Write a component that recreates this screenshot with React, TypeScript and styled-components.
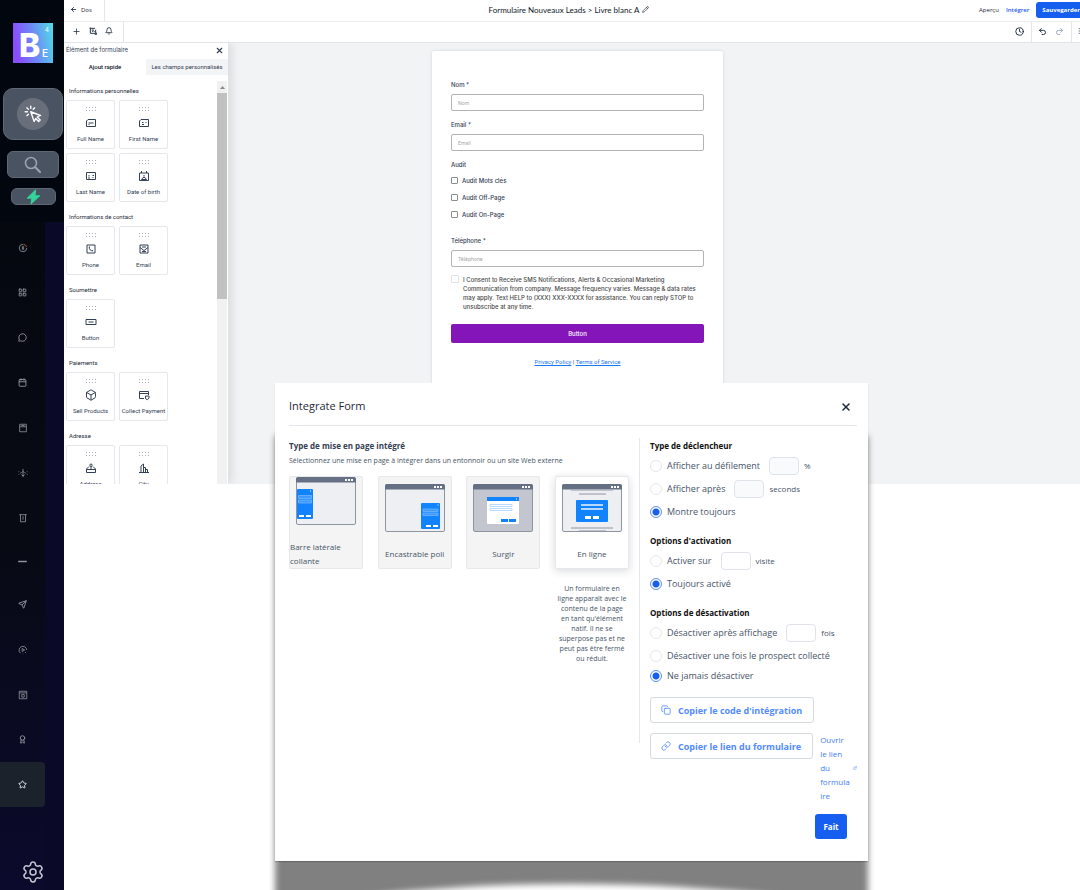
import React from 'react';
import styled, { createGlobalStyle, css } from 'styled-components';
import {
  ArrowLeft, Award, Bell, Box, Calendar, Clock, Copy, ExternalLink, LayoutGrid,
  Link as LinkIcon, MessageCircle, Minus, Pencil, Plus, Redo2, Send, Settings,
  SlidersHorizontal, Star, Undo2, X,
} from 'lucide-react';

const Global = createGlobalStyle`
  * { box-sizing: border-box; }
  body { margin: 0; background: #fff; }
  button, input { font: inherit; margin: 0; }
  button { cursor: pointer; }
  p, h1, h2, h3, ul, fieldset, legend { margin: 0; padding: 0; border: 0; }
  ul { list-style: none; }
  svg { display: block; flex: none; }
`;

const ui = '"Open Sans", "Noto Sans", sans-serif';

/* ---------- Page frame ---------- */

const Page = styled.div`
  display: flex;
  min-height: 100vh;
  font-family: ${ui};
  color: #344054;
`;

const Main = styled.main`
  flex: 1;
  min-width: 0;
  overflow: hidden;
`;

/* ---------- Sidebar ---------- */

const Sidebar = styled.aside`
  flex: none;
  width: 64px;
  display: flex;
  flex-direction: column;
  background: #02060f;
`;

const Shortcuts = styled.div`
  display: flex;
  flex-direction: column;
  align-items: center;
  height: 222px;
  padding: 23px 0 0 2px;
`;

const Shortcut = styled.button<{ $w: number; $h: number; $gap: number }>`
  display: flex;
  align-items: center;
  justify-content: center;
  width: ${(p) => p.$w}px;
  height: ${(p) => p.$h}px;
  margin-top: ${(p) => p.$gap}px;
  padding: 0;
  border: 1px solid #5f6875;
  border-radius: ${(p) => (p.$h > 40 ? 10 : 6)}px;
  background: #4a5361;
  color: #9aa1ad;
`;

const Halo = styled.span`
  display: flex;
  align-items: center;
  justify-content: center;
  width: 32px;
  height: 32px;
  border-radius: 50%;
  background: #686f7b;
  color: #fff;
`;

const NavArea = styled.div`
  flex: 1;
  display: flex;
  flex-direction: column;
  justify-content: space-between;
  padding: 3px 0 6px;
  background:
    linear-gradient(#0a0928, #0a0928) 45px 0 / 19px 100% no-repeat,
    linear-gradient(#05080f, #070a12 45%, #0a0a22 75%, #0b0a2c);
`;

const NavItem = styled.a<{ $short?: boolean; $active?: boolean }>`
  display: flex;
  align-items: center;
  justify-content: center;
  width: 45px;
  height: ${(p) => (p.$short ? 42 : 45)}px;
  color: ${(p) => (p.$active ? '#e3e6ea' : '#8d919a')};
  ${(p) => p.$active && css`
    background: #1b222c;
    border-radius: 0 4px 4px 0;
  `}
`;

const GearButton = styled.button`
  align-self: center;
  padding: 0;
  margin-left: 2px;
  border: 0;
  background: none;
  color: #c4c6d0;
`;

/* ---------- Builder ---------- */

const Builder = styled.section`
  display: flex;
  flex-direction: column;
  height: 484px;
  background: #f2f3f5;
`;

const TitleBar = styled.header`
  display: grid;
  grid-template-columns: 1fr auto 1fr;
  height: 22px;
  background: #fff;
  border-bottom: 1px solid #eaecee;
`;

const BackButton = styled.button`
  display: flex;
  align-items: center;
  gap: 4px;
  width: 41px;
  padding: 0 0 2px 6px;
  border: 0;
  border-right: 1px solid #e4e6ea;
  background: none;
  font-size: 6px;
  color: #1d2939;
`;

const FormTitle = styled.h1`
  display: flex;
  align-items: center;
  gap: 3px;
  margin-right: 6px;
  padding-bottom: 2px;
  font: 400 8px/12px Lato, sans-serif;
  color: #101828;
`;

const TitleActions = styled.div`
  display: flex;
  align-items: center;
  justify-content: flex-end;
  gap: 7px;
  padding-bottom: 2px;
  font-size: 6px;
`;

const TextButton = styled.button<{ $accent?: boolean }>`
  padding: 0;
  border: 0;
  background: none;
  font-weight: ${(p) => (p.$accent ? 600 : 400)};
  color: ${(p) => (p.$accent ? '#155eef' : '#1d2939')};
`;

const SaveButton = styled.button`
  height: 16px;
  padding: 0 0 0 6px;
  border: 0;
  border-radius: 3px 0 0 3px;
  background: #155eef;
  color: #fff;
  font-weight: 700;
`;

const ToolBar = styled.div`
  display: flex;
  justify-content: space-between;
  height: 21px;
  background: #fff;
  border-bottom: 1px solid #e1e4e8;
`;

const Tools = styled.div<{ $side?: 'left' | 'right' }>`
  display: flex;
  align-items: center;
  gap: 8px;
  padding: 0 7px 2px;
  color: #1d2939;
  ${(p) => p.$side === 'left' && css`
    padding: 0 10px 2px 8px;
    border-right: 1px solid #e4e6ea;
  `}
  ${(p) => p.$side === 'right' && css`
    padding: 0 7px 2px 6px;
    border: solid #e4e6ea;
    border-width: 0 1px;
  `}
`;

const EdgeTool = styled.div`
  display: flex;
  align-items: center;
  width: 8px;
  padding: 0 0 2px 6px;
  overflow: hidden;
`;

const ToolGroup = styled.div`
  display: flex;
`;

const IconButton = styled.button<{ $dim?: boolean }>`
  display: flex;
  padding: 0;
  border: 0;
  background: none;
  color: ${(p) => (p.$dim ? '#98a2b3' : 'inherit')};
`;

const Workspace = styled.div`
  position: relative;
  flex: 1;
  min-height: 0;
  overflow: hidden;
`;

/* ---------- Element panel, floating over the canvas ---------- */

const Panel = styled.section`
  position: absolute;
  inset: 0 auto 0 0;
  width: 164px;
  display: flex;
  flex-direction: column;
  background: #fff;
  box-shadow: 3px 0 9px rgba(16, 24, 40, 0.12);
  font-family: Roboto, sans-serif;
`;

const PanelHead = styled.div`
  display: flex;
  align-items: center;
  justify-content: space-between;
  height: 16px;
  padding: 0 4px 2px 2px;
  font: 400 6px/10px Inter, sans-serif;
  color: #344054;
`;

const Tabs = styled.div`
  display: grid;
  grid-template-columns: 1fr 1fr;
  height: 16px;
  background: #f3f4f6;
`;

const Tab = styled.button<{ $active?: boolean }>`
  padding: 0 0 2px;
  border: 0;
  background: ${(p) => (p.$active ? '#fff' : 'none')};
  font-size: 6px;
  font-weight: ${(p) => (p.$active ? 500 : 400)};
  color: ${(p) => (p.$active ? '#101828' : '#344054')};
  white-space: nowrap;
`;

const PanelBody = styled.div`
  flex: 1;
  min-height: 0;
  display: flex;
  justify-content: space-between;
  overflow: hidden;
  padding-right: 1px;
`;

const ElementList = styled.div`
  padding: 1px 0 0 2px;
`;

const GroupTitle = styled.h3`
  margin: 10px 0 4px 3px;
  font-size: 6px;
  line-height: 10px;
  font-weight: 400;
  color: #1d2939;
`;

const Tiles = styled.div`
  display: grid;
  grid-template-columns: 49px 49px;
  gap: 4px;
`;

const Tile = styled.button`
  display: flex;
  flex-direction: column;
  align-items: center;
  height: 49px;
  padding: 6px 0 0;
  border: 1px solid #e4e7ec;
  border-radius: 2px;
  background: #fff;
  font-size: 6px;
  line-height: 10px;
  color: #344054;
  white-space: nowrap;

  svg:nth-child(2) {
    margin: 5px 0;
  }
`;

const ScrollTrack = styled.div`
  width: 10px;
  margin-top: 6px;
  background: #f1f1f1;
`;

const ScrollArrow = styled.div`
  display: flex;
  align-items: center;
  justify-content: center;
  height: 12px;
  color: #8b8b8b;
`;

const ScrollThumb = styled.div`
  height: 206px;
  background: #c1c1c1;
`;

/* ---------- Form canvas ---------- */

const Canvas = styled.div`
  display: flex;
  justify-content: center;
  height: 100%;
  padding: 8px 0 0 11px;
`;

const FormCard = styled.form`
  width: 291px;
  padding: 29px 19px;
  background: #fff;
  border-radius: 2px 2px 0 0;
  box-shadow: 0 0 3px rgba(16, 24, 40, 0.15);
  font: 500 6px/10px Inter, sans-serif;
  color: #344054;
`;

const Field = styled.label`
  display: flex;
  flex-direction: column;
  gap: 4px;
  margin-bottom: 9px;
`;

const TextInput = styled.input`
  height: 17px;
  padding: 0 6px;
  border: 1px solid #b3b3b3;
  border-radius: 2px;
  background: #fff;
  font-size: 5px;
  font-weight: 400;
  outline: 0;
  &::placeholder { color: #a3a3a3; opacity: 1; }
`;

const Choices = styled.fieldset`
  margin-bottom: 13px;
`;

const ChoiceLegend = styled.legend`
  display: block;
  margin-bottom: 2px;
`;

const Choice = styled.label`
  display: flex;
  align-items: center;
  gap: 4px;
  height: 17px;
`;

const Tick = styled.input<{ $soft?: boolean }>`
  appearance: none;
  flex: none;
  width: ${(p) => (p.$soft ? 8 : 7)}px;
  height: ${(p) => (p.$soft ? 8 : 7)}px;
  border: 1px solid ${(p) => (p.$soft ? '#dfe2e7' : '#8c8c8c')};
  border-radius: 1px;
  background: #fff;
`;

const Consent = styled.label`
  display: flex;
  gap: 4px;
  margin: -1px 0 13px;
  line-height: 9px;
  color: #4a4a4a;
`;

const SubmitButton = styled.button`
  width: 100%;
  height: 19px;
  border: 0;
  border-radius: 2px;
  background: #8415b9;
  color: #fff;
`;

const Legal = styled.p`
  margin-top: 14px;
  text-align: center;
  font: 400 6px/10px Roboto, sans-serif;
  a { color: #1877f2; }
`;

/* ---------- Modal ---------- */

const Overlay = styled.div`
  position: relative;
  display: flex;
  justify-content: center;
  margin-top: -101px;
  padding-right: 1px;
`;

const Stage = styled.div`
  position: relative;
  width: 100%;
  max-width: 593px;
  padding-bottom: 29px;

  &::before {
    content: '';
    position: absolute;
    inset: 53px 0 -20px;
    background: #808080;
    filter: blur(3px);
  }

  &::after {
    content: '';
    position: absolute;
    left: 0;
    right: 0;
    bottom: -84px;
    height: 90px;
    border-radius: 50%;
    background: #fff;
    filter: blur(3px);
  }
`;

const Dialog = styled.section`
  position: relative;
  z-index: 1;
  background: #fff;
  padding-bottom: 22px;
  box-shadow: 0 1px 1px rgba(0, 0, 0, 0.2);
`;

const DialogHead = styled.header`
  display: flex;
  align-items: center;
  justify-content: space-between;
  height: 43px;
  margin: 0 11px 0 14px;
  padding: 6px 5px 0 0;
  border-bottom: 1px solid #e4e7ec;
  color: #1d2939;
`;

const DialogTitle = styled.h2`
  padding-bottom: 2px;
  font-size: 11px;
  line-height: 16px;
  font-weight: 500;
`;

const DialogBody = styled.div`
  display: flex;
  padding: 12px 11px 0 14px;
`;

const LayoutColumn = styled.div`
  flex: 1;
  align-self: flex-start;
  min-height: 305px;
  padding: 2px 10px 0 0;
  border-right: 1px solid #e4e7ec;
`;

const SettingsColumn = styled.div`
  flex: none;
  width: 217px;
  padding: 2px 0 0 10px;
`;

const Heading = styled.h3<{ $dark?: boolean }>`
  font-size: 8px;
  line-height: 12px;
  font-weight: 700;
  color: ${(p) => (p.$dark ? '#101010' : '#344054')};
`;

const Hint = styled.p`
  margin: 3px 0 9px;
  font-size: 7px;
  line-height: 12px;
  color: #475467;
`;

const LayoutGridRow = styled.div`
  display: grid;
  grid-template-columns: repeat(4, 74px);
  justify-content: space-between;
`;

const LayoutCard = styled.button<{ $active?: boolean }>`
  display: flex;
  flex-direction: column;
  align-items: center;
  justify-content: center;
  gap: 15px;
  width: 100%;
  height: 93px;
  padding: 0;
  border: 1px solid #e6e8ec;
  border-radius: 2px;
  background: ${(p) => (p.$active ? '#fff' : '#f4f4f4')};
  box-shadow: ${(p) => (p.$active ? '0 2px 8px rgba(16, 24, 40, 0.16)' : 'none')};
  font-size: 8px;
  line-height: 14px;
  text-align: left;
  color: #475467;
`;

const LayoutNote = styled.p`
  margin-top: 15px;
  padding: 0 2px;
  font-size: 7px;
  line-height: 10px;
  text-align: center;
  color: #475467;
`;

const OptionGroup = styled.fieldset`
  margin-bottom: 12px;
`;

const OptionRow = styled.div<{ $compact?: boolean }>`
  display: flex;
  align-items: center;
  gap: 5px;
  height: ${(p) => (p.$compact ? 17 : 23)}px;
  font-size: 8px;
  color: #475467;
  &:first-of-type { margin-top: 2px; }
`;

const OptionLabel = styled.label`
  display: flex;
  align-items: center;
  gap: 5px;
  margin-right: 4px;
  font-size: 9px;
  white-space: nowrap;
`;

const Radio = styled.input`
  appearance: none;
  flex: none;
  width: 12px;
  height: 12px;
  border: 1px solid #e4e7ec;
  border-radius: 50%;
  background: #fff;
  &:checked {
    border-color: #5b8ff9;
    background: radial-gradient(circle, #155eef 3px, #fff 4px);
  }
`;

const NumberBox = styled.input<{ $muted?: boolean }>`
  width: 30px;
  height: 18px;
  padding: 0 4px;
  border: 1px solid #dfe2e8;
  border-radius: 4px;
  background: ${(p) => (p.$muted ? '#f9fafb' : '#fff')};
  outline: 0;
`;

const Actions = styled.div`
  display: flex;
  flex-direction: column;
  align-items: flex-start;
  gap: 10px;
  margin-top: 13px;
`;

const ActionRow = styled.div`
  display: flex;
  align-items: flex-start;
  gap: 7px;
`;

const OutlineButton = styled.button`
  display: flex;
  align-items: center;
  gap: 7px;
  height: 26px;
  padding: 0 11px 0 10px;
  border: 1px solid #d5d9e2;
  border-radius: 3px;
  background: #fff;
  font-size: 9px;
  font-weight: 700;
  color: #528bff;
  white-space: nowrap;
`;

const OpenLink = styled.a`
  display: flex;
  align-items: center;
  gap: 2px;
  font-size: 8px;
  line-height: 14px;
  text-decoration: none;
  color: #3f80f6;
  span { width: 31px; overflow-wrap: anywhere; }
`;

const DialogFoot = styled.footer`
  display: flex;
  justify-content: flex-end;
  padding: 11px 21px 0 0;
`;

const DoneButton = styled.button`
  width: 32px;
  height: 25px;
  padding: 0;
  border: 0;
  border-radius: 3px;
  background: #155eef;
  font-size: 8px;
  font-weight: 700;
  color: #fff;
`;

/* ---------- Drawings ---------- */

const Logo = () => (
  <svg width="40" height="40" viewBox="0 0 40 40" overflow="visible" role="img" aria-label="BE4">
    <defs>
      <linearGradient id="logo" x1="0" y1="0.2" x2="1" y2="0">
        <stop offset="0" stopColor="#8a4dff" />
        <stop offset="0.5" stopColor="#6a8ff5" />
        <stop offset="1" stopColor="#4fdfe6" />
      </linearGradient>
    </defs>
    <rect width="40" height="40" fill="url(#logo)" />
    <g fill="#fff" fontFamily="Inter, sans-serif">
      <text x="6" y="34" fontSize="32" fontWeight="800">B</text>
      <text x="29" y="34" fontSize="10" fontWeight="600">E</text>
      <text x="32" y="9" fontSize="6">4</text>
    </g>
  </svg>
);

const ClickIcon = () => (
  <svg width="18" height="18" viewBox="0 0 24 24" fill="none" stroke="currentColor" strokeWidth="1.8" strokeLinecap="round" strokeLinejoin="round">
    <path d="M9 9l13 5-4.400 2 4 4-2 2-4-4L13.500 22z" />
    <path d="M9 1.500v3M1.500 9h3M3.800 3.800l2 2M14.200 3.800l-2 2M3.800 14.200l2-2" />
  </svg>
);

const Magnifier = () => (
  <svg width="18" height="18" viewBox="0 0 18 18" fill="none" stroke="currentColor" strokeLinecap="round">
    <circle cx="7" cy="7" r="5.500" strokeWidth="1.600" />
    <path d="M11.300 11.300l4.700 4.700" strokeWidth="2.200" />
  </svg>
);

const Bolt = () => (
  <svg width="15" height="16" viewBox="0 0 15 16" fill="#34d399">
    <path d="M9.500 1L1.200 9.200h4.600L5 15l8.800-8.200H9z" stroke="#34d399" strokeLinejoin="round" />
  </svg>
);

const Grip = () => (
  <svg width="10" height="5" viewBox="0 0 10 5" fill="#a9b1bf">
    {[0, 3, 6, 9].map((x) => (
      <React.Fragment key={x}>
        <rect x={x} y="0" width="1" height="1" />
        <rect x={x} y="3" width="1" height="1" />
      </React.Fragment>
    ))}
  </svg>
);

const drawings = {
  fullName: 'M3 2.500h7.500v7h-9V4zM3.500 6h5M3.500 7.500h1',
  firstName: 'M3 2.500h7.500v7h-9V4zM4 5.500h1.500M4 7.500h2M7.500 5.500h1',
  lastName: 'M1.500 2.500h9v7h-9zM4 5v1.500M3 8h2M7.500 5.500h1.500M7.500 7.500h1',
  birth: 'M1.500 3h9v7.500h-9zM3.500 1v2M8.500 1v2M6 5v1.500M3.500 9.500L5 7.500h2L8.500 9.500z',
  phone: 'M2 2h8v8H2zM4.200 4c0 2.500 1.300 3.800 3.800 3.800M4 4h1M7.500 7v1',
  email: 'M2 2h8v8H2zM2 4.500l4 3 4-3M4 4h4M4 8.500h4',
  button: 'M1 3.500h10v5H1zM3.500 6h5',
  payment: 'M6 9.500H1.500v-7h9V6M1.500 4.500h9M7.500 7h3.500v2L9.200 10.800 7.500 9.500z',
  address: 'M4 4.500L1.500 7v3.500h9V7L8 4.500M1.500 7.500h9M6 7V5M4.800 3.200a1.200 1.200 0 1 1 2.400 0L6 5z',
  city: 'M1 10.500h10M3 10V4l2.500-2v8M5.500 5.500H7.500V10M7.500 7.500h2V10',
  dollar: 'M6 1.500a4.500 4.500 0 1 0 4.500 4.500M6 3.500v5M4.500 5h3M4.500 7h3',
  register: 'M2 1.500h8v9H2zM2 4.500h8M4 3h4',
  funnel: 'M6 1v10M4 6L6 4l2 2M4 8l2 1.500L8 8M1 4v1M1 7v1M11 4v1M11 7v1M2.500 6h1M8.500 6h1',
  receipt: 'M1.500 2h9M3 2v8.500h6V2M6 4v4',
  play: 'M3 9.800A4.600 4.600 0 1 1 10.500 6M5 4.200v3.600L8 6zM9.500 8.500l-1 1M6 10.500v.5',
  site: 'M1.500 1.500h9v9h-9zM1.500 3.500h9M4.500 5.500h3v3h-3z',
} as const;

type Drawing = keyof typeof drawings;

const Glyph = ({ name, size }: { name: Drawing; size: number }) => (
  <svg width={size} height={size} viewBox="0 0 12 12" fill="none" stroke="currentColor" strokeWidth="1" strokeLinejoin="round">
    <path d={drawings[name]} />
    {name === 'dollar' && <path d="M6.500 1.500A4.500 4.500 0 0 1 10.400 5" stroke="#c2672b" />}
  </svg>
);

type Kind = 'sticky' | 'polite' | 'popup' | 'inline';

const LayoutArt = ({ kind }: { kind: Kind }) => (
  <svg width="60" height="48" viewBox="0 0 60 48">
    <rect x="0.500" y="0.500" width="59" height="47" rx="1.500" fill={kind === 'popup' ? '#c3c6ce' : '#eeeff3'} stroke="#8d95a3" />
    <path d="M0 5.500V2a2 2 0 0 1 2-2h56a2 2 0 0 1 2 2v3.500z" fill="#667085" />
    <g fill="#fff">
      <rect x="49" y="2" width="2" height="2" />
      <rect x="52" y="2" width="2" height="2" />
      <rect x="55" y="2" width="2" height="2" />
    </g>
    {kind === 'sticky' && (
      <g>
        <rect x="1" y="12" width="16" height="30" rx="1" fill="#1283ff" />
        <path d="M2.500 18.500h13v3h-13zM2.500 23h13v3h-13z" fill="#3f9aff" stroke="#8cc2ff" strokeWidth="0.600" />
        <path d="M3 38h5v2H3zM10 38h5v2h-5zM14 13.500h1v1h-1z" fill="#fff" />
      </g>
    )}
    {kind === 'polite' && (
      <g>
        <rect x="36" y="19" width="19" height="26" rx="1" fill="#1283ff" />
        <path d="M38 25h15v2.500H38zM38 29h15v2.500H38z" fill="#3f9aff" stroke="#8cc2ff" strokeWidth="0.600" />
        <path d="M41 41h5v2h-5zM48 41h5v2h-5zM52.500 20.500h1v1h-1z" fill="#fff" />
      </g>
    )}
    {kind === 'popup' && (
      <g>
        <rect x="14" y="13" width="32" height="27" rx="1" fill="#fff" />
        <path d="M14 13h32v4H14zM28 35h7v3h-7zM36 35h7v3h-7z" fill="#1283ff" />
        <path d="M17 20.500h22v2H17zM17 24.500h22v2H17z" fill="#fff" stroke="#8cc2ff" strokeWidth="0.600" />
        <path d="M43 14.500h1v1h-1z" fill="#fff" />
      </g>
    )}
    {kind === 'inline' && (
      <g>
        <path d="M9 6h42v1H9zM17 9h27v2H17zM9 43h42v2H9zM17 46h27v1H17z" fill="#bfc2ca" />
        <rect x="14" y="16" width="32" height="22" rx="1" fill="#1283ff" />
        <path d="M19 20h22v2H19zM19 24h22v2H19z" fill="#b5d8ff" />
        <path d="M23 32h6v3h-6zM31 32h6v3h-6z" fill="#fff" />
      </g>
    )}
  </svg>
);

/* ---------- Data ---------- */

const navIcons = [
  ['Compte', 'dollar'], ['Tableau de bord', LayoutGrid], ['Conversations', MessageCircle],
  ['Calendrier', Calendar], ['Contacts', 'register'], ['Opportunités', 'funnel'],
  ['Paiements', 'receipt'], ['Séparateur', Minus], ['Marketing', Send], ['Automatisation', 'play'],
  ['Sites', 'site'], ['Adhésions', Award], ['Réputation', Star],
] as const;

const groups: { title: string; tiles: [string, Drawing | typeof Box][] }[] = [
  { title: 'Informations personnelles', tiles: [['Full Name', 'fullName'], ['First Name', 'firstName'], ['Last Name', 'lastName'], ['Date of birth', 'birth']] },
  { title: 'Informations de contact', tiles: [['Phone', 'phone'], ['Email', 'email']] },
  { title: 'Soumettre', tiles: [['Button', 'button']] },
  { title: 'Paiements', tiles: [['Sell Products', Box], ['Collect Payment', 'payment']] },
  { title: 'Adresse', tiles: [['Address', 'address'], ['City', 'city']] },
];

const layouts: { name: string; kind: Kind; note?: string }[] = [
  { name: 'Barre latérale collante', kind: 'sticky' },
  { name: 'Encastrable poli', kind: 'polite' },
  { name: 'Surgir', kind: 'popup' },
  { name: 'En ligne', kind: 'inline', note: "Un formulaire en ligne apparaît avec le contenu de la page en tant qu'élément natif. Il ne se superpose pas et ne peut pas être fermé ou réduit." },
];

type Option = { label: string; unit?: string; muted?: boolean; checked?: boolean; compact?: boolean };

const optionGroups: { title: string; name: string; options: Option[] }[] = [
  {
    title: 'Type de déclencheur', name: 'trigger',
    options: [
      { label: 'Afficher au défilement', unit: '%', muted: true },
      { label: 'Afficher après', unit: 'seconds', muted: true },
      { label: 'Montre toujours', checked: true },
    ],
  },
  {
    title: "Options d'activation", name: 'activation',
    options: [{ label: 'Activer sur', unit: 'visite' }, { label: 'Toujours activé', checked: true }],
  },
  {
    title: 'Options de désactivation', name: 'deactivation',
    options: [
      { label: 'Désactiver après affichage', unit: 'fois' },
      { label: 'Désactiver une fois le prospect collecté' },
      { label: 'Ne jamais désactiver', checked: true, compact: true },
    ],
  },
];

/* ---------- Sections ---------- */

const SideNav = () => (
  <Sidebar>
    <Shortcuts>
      <Logo />
      <Shortcut $w={60} $h={52} $gap={25} aria-label="Actions"><Halo><ClickIcon /></Halo></Shortcut>
      <Shortcut $w={52} $h={27} $gap={11} aria-label="Rechercher"><Magnifier /></Shortcut>
      <Shortcut $w={45} $h={17} $gap={10} aria-label="Rapide"><Bolt /></Shortcut>
    </Shortcuts>
    <NavArea>
      <nav>
        {navIcons.map(([label, Icon]) => (
          <NavItem key={label} href="#" aria-label={label} $short={label === 'Séparateur'} $active={label === 'Réputation'}>
            {typeof Icon === 'string'
              ? <Glyph name={Icon} size={10} />
              : <Icon size={label === 'Séparateur' ? 13 : 9} strokeWidth={2.500} />}
          </NavItem>
        ))}
      </nav>
      <GearButton aria-label="Paramètres"><Settings size={24} strokeWidth={1.500} /></GearButton>
    </NavArea>
  </Sidebar>
);

const ElementPanel = () => (
  <Panel>
    <PanelHead>
      Élément de formulaire
      <IconButton aria-label="Fermer"><X size={9} strokeWidth={3} /></IconButton>
    </PanelHead>
    <Tabs>
      <Tab $active>Ajout rapide</Tab>
      <Tab>Les champs personnalisés</Tab>
    </Tabs>
    <PanelBody>
      <ElementList>
        {groups.map((g) => (
          <React.Fragment key={g.title}>
            <GroupTitle>{g.title}</GroupTitle>
            <Tiles>
              {g.tiles.map(([name, Icon]) => (
                <Tile key={name} type="button">
                  <Grip />
                  {typeof Icon === 'string' ? <Glyph name={Icon} size={12} /> : <Icon size={12} strokeWidth={2} />}
                  {name}
                </Tile>
              ))}
            </Tiles>
          </React.Fragment>
        ))}
      </ElementList>
      <ScrollTrack>
        <ScrollArrow><svg width="5" height="3" viewBox="0 0 5 3"><path d="M0 3l2.500-3L5 3z" fill="currentColor" /></svg></ScrollArrow>
        <ScrollThumb />
      </ScrollTrack>
    </PanelBody>
  </Panel>
);

const LeadForm = () => (
  <FormCard>
    <Field>Nom *<TextInput placeholder="Nom" /></Field>
    <Field>Email *<TextInput type="email" placeholder="Email" /></Field>
    <Choices>
      <ChoiceLegend>Audit</ChoiceLegend>
      {['Audit Mots clés', 'Audit Off-Page', 'Audit On-Page'].map((c) => (
        <Choice key={c}><Tick type="checkbox" />{c}</Choice>
      ))}
    </Choices>
    <Field>Téléphone *<TextInput type="tel" placeholder="Téléphone" /></Field>
    <Consent>
      <Tick type="checkbox" $soft />
      <span>
        I Consent to Receive SMS Notifications, Alerts &amp; Occasional Marketing<br />
        Communication from company. Message frequency varies. Message &amp; data rates<br />
        may apply. Text HELP to (XXX) XXX-XXXX for assistance. You can reply STOP to<br />
        unsubscribe at any time.
      </span>
    </Consent>
    <SubmitButton type="button">Button</SubmitButton>
    <Legal><a href="#">Privacy Policy</a> | <a href="#">Terms of Service</a></Legal>
  </FormCard>
);

const IntegrateDialog = () => (
  <Dialog role="dialog" aria-label="Integrate Form">
    <DialogHead>
      <DialogTitle>Integrate Form</DialogTitle>
      <IconButton aria-label="Fermer"><X size={12} strokeWidth={3} /></IconButton>
    </DialogHead>
    <DialogBody>
      <LayoutColumn>
        <Heading>Type de mise en page intégré</Heading>
        <Hint>Sélectionnez une mise en page à intégrer dans un entonnoir ou un site Web externe</Hint>
        <LayoutGridRow>
          {layouts.map((l) => (
            <div key={l.kind}>
              <LayoutCard type="button" $active={l.kind === 'inline'}>
                <LayoutArt kind={l.kind} />
                <span>{l.name}</span>
              </LayoutCard>
              {l.note && <LayoutNote>{l.note}</LayoutNote>}
            </div>
          ))}
        </LayoutGridRow>
      </LayoutColumn>
      <SettingsColumn>
        {optionGroups.map((g) => (
          <OptionGroup key={g.name}>
            <Heading $dark>{g.title}</Heading>
            {g.options.map((o) => (
              <OptionRow key={o.label} $compact={o.compact}>
                <OptionLabel><Radio type="radio" name={g.name} defaultChecked={o.checked} />{o.label}</OptionLabel>
                {o.unit && <NumberBox $muted={o.muted} aria-label={`${o.label} (${o.unit})`} />}
                {o.unit}
              </OptionRow>
            ))}
          </OptionGroup>
        ))}
        <Actions>
          <OutlineButton type="button"><Copy size={10} />Copier le code d'intégration</OutlineButton>
          <ActionRow>
            <OutlineButton type="button"><LinkIcon size={10} />Copier le lien du formulaire</OutlineButton>
            <OpenLink href="#"><span>Ouvrir le lien du formulaire</span><ExternalLink size={4} /></OpenLink>
          </ActionRow>
        </Actions>
      </SettingsColumn>
    </DialogBody>
    <DialogFoot><DoneButton type="button">Fait</DoneButton></DialogFoot>
  </Dialog>
);

export default function App() {
  return (
    <Page>
      <Global />
      <SideNav />
      <Main>
        <Builder>
          <TitleBar>
            <BackButton><ArrowLeft size={7} strokeWidth={3} />Dos</BackButton>
            <FormTitle>Formulaire Nouveaux Leads &gt; Livre blanc A <Pencil size={7} /></FormTitle>
            <TitleActions>
              <TextButton>Aperçu</TextButton>
              <TextButton $accent>Intégrer</TextButton>
              <SaveButton>Sauvegarder</SaveButton>
            </TitleActions>
          </TitleBar>
          <ToolBar>
            <Tools $side="left">
              <IconButton aria-label="Ajouter"><Plus size={9} strokeWidth={2} /></IconButton>
              <IconButton aria-label="Style">
                <svg width="8" height="8" viewBox="0 0 12 12" fill="none" stroke="currentColor" strokeWidth="1.400">
                  <path d="M1 2h8M2 1v8.500h8V4M4 4.500h3M4.500 7l2-1.500 2 2M8.500 11h3M11 8.500V11" />
                </svg>
              </IconButton>
              <IconButton aria-label="Notifications"><Bell size={8} strokeWidth={2.500} /></IconButton>
            </Tools>
            <ToolGroup>
              <Tools><IconButton aria-label="Historique"><Clock size={9} strokeWidth={2.500} /></IconButton></Tools>
              <Tools $side="right">
                <IconButton aria-label="Annuler"><Undo2 size={9} strokeWidth={2.500} /></IconButton>
                <IconButton aria-label="Rétablir" $dim><Redo2 size={9} strokeWidth={2.500} /></IconButton>
              </Tools>
              <EdgeTool><SlidersHorizontal size={8} /></EdgeTool>
            </ToolGroup>
          </ToolBar>
          <Workspace>
            <Canvas><LeadForm /></Canvas>
            <ElementPanel />
          </Workspace>
        </Builder>
        <Overlay>
          <Stage><IntegrateDialog /></Stage>
        </Overlay>
      </Main>
    </Page>
  );
}
